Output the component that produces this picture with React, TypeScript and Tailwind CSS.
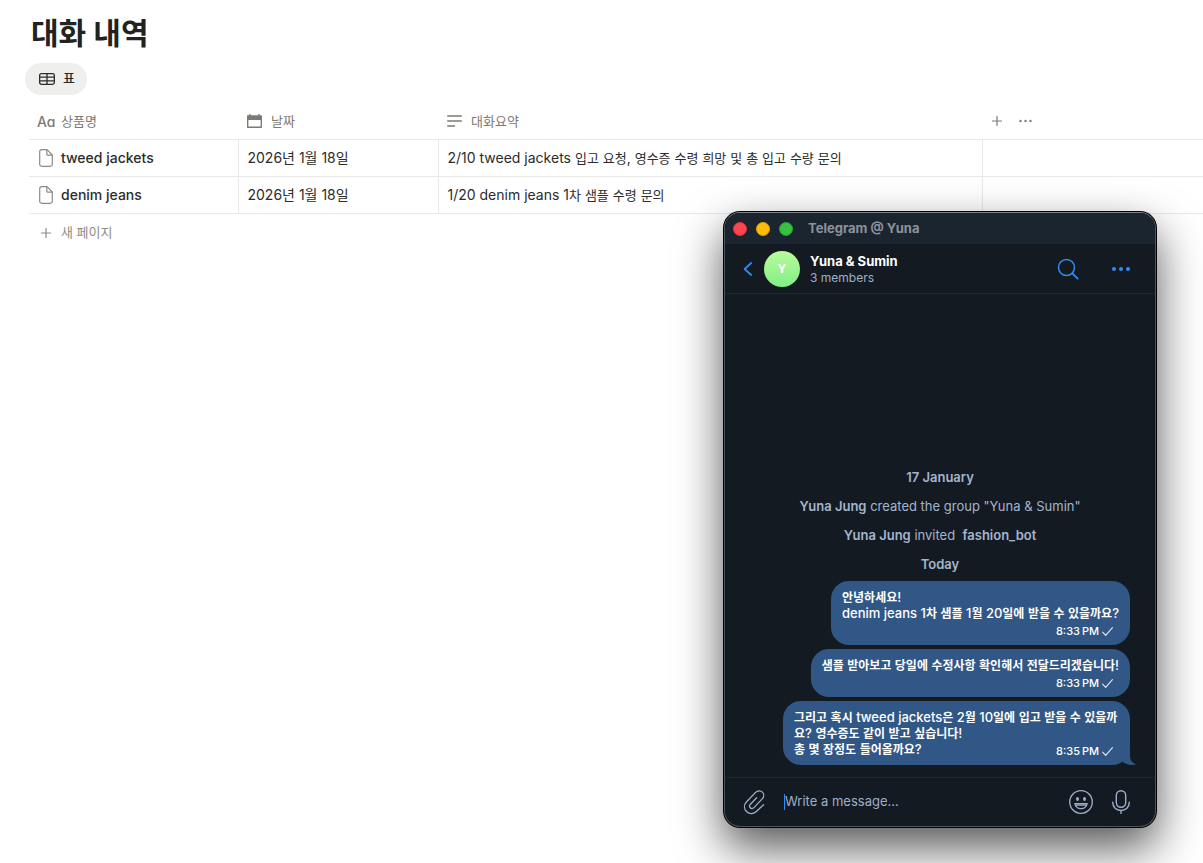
import type { ReactNode } from "react";

const HANGUL = /([\uac00-\ud7a3]+)/;

/** Sets Hangul runs a step smaller than the Latin text around them. */
function Mixed({ text, hangul }: { text: string; hangul: string }) {
  return (
    <>
      {text.split(HANGUL).map((part, i) =>
        HANGUL.test(part) ? (
          <span key={i} className={hangul}>
            {part}
          </span>
        ) : (
          part
        ),
      )}
    </>
  );
}

const rows = [
  {
    name: "tweed jackets",
    date: "2026년 1월 18일",
    summary: "2/10 tweed jackets 입고 요청, 영수증 수령 희망 및 총 입고 수량 문의",
  },
  { name: "denim jeans", date: "2026년 1월 18일", summary: "1/20 denim jeans 1차 샘플 수령 문의" },
];

function TableIcon() {
  return (
    <svg width="16" height="12" viewBox="0 0 16 12" fill="none" stroke="#2c2c2b" strokeWidth="1.3" aria-hidden="true">
      <rect x="0.65" y="0.65" width="14.7" height="10.7" rx="1.8" />
      <path d="M0.65 4.2H15.35M0.65 7.8H15.35M8 0.65V11.35" />
    </svg>
  );
}

function CalendarIcon() {
  return (
    <svg width="15" height="14" viewBox="0 0 15 14" fill="none" aria-hidden="true">
      <path
        fill="#7d7a75"
        fillRule="evenodd"
        d="M2.2 0H3.6V1.3H11.4V0H12.8V1.3H14C14.6 1.3 15 1.7 15 2.3V13C15 13.6 14.6 14 14 14H1C.4 14 0 13.6 0 13V2.3C0 1.7.4 1.3 1 1.3H2.2ZM1.4 6V12.6H13.6V6Z"
      />
    </svg>
  );
}

function LinesIcon() {
  return (
    <svg width="15" height="12" viewBox="0 0 15 12" stroke="#7d7a75" strokeWidth="1.5" strokeLinecap="round" aria-hidden="true">
      <path d="M.75 1H14.25M.75 6H14.25M.75 11H7.5" />
    </svg>
  );
}

function PageIcon() {
  return (
    <svg width="14" height="18" viewBox="0 0 14 18" fill="none" stroke="#8e8b86" strokeWidth="1.2" strokeLinejoin="round" aria-hidden="true">
      <path d="M2.7.7H8L13.300 6V15.200A2 2 0 0 1 11.300 17.300H2.700A2 2 0 0 1 .7 15.200V2.700A2 2 0 0 1 2.700.7Z" />
      <path d="M7.800.9V5.200A1 1 0 0 0 8.800 6.200H13.100" />
    </svg>
  );
}

function PlusIcon({ color }: { color: string }) {
  return (
    <svg width="10" height="10" viewBox="0 0 10 10" stroke={color} strokeWidth="1.2" strokeLinecap="round" aria-hidden="true">
      <path d="M5 .5V9.5M.5 5H9.5" />
    </svg>
  );
}

function Check() {
  return (
    <svg width="11" height="9" viewBox="0 0 11 9" fill="none" stroke="#e4eaf2" strokeWidth="1.1" strokeLinecap="round" strokeLinejoin="round" aria-hidden="true">
      <path d="M.6 5.1L3.7 8.3L10.4.6" />
    </svg>
  );
}

function Bubble({ children, time, tucked, tail }: { children: ReactNode; time: string; tucked?: boolean; tail?: boolean }) {
  return (
    <div className="relative max-w-[347px] rounded-[18px] bg-[#315786] px-[11px] pt-2 pb-[6px] text-[13px] leading-4 font-medium text-white">
      {children}
      <div
        className={`flex h-4 items-center justify-end gap-[3px] pr-[6px] text-[11px] leading-4 ${tucked ? "mt-[-14px]" : "mt-[2px]"}`}
      >
        <span>{time}</span>
        <Check />
      </div>
      {tail && (
        <svg className="absolute -right-[6px] bottom-0" width="16" height="16" viewBox="0 0 16 16" fill="#315786" aria-hidden="true">
          <path d="M0 0H10V7C10 11.500 12 14 16 15.200C12 16.600 7 16 3 13Z" />
        </svg>
      )}
    </div>
  );
}

function ChatWindow() {
  return (
    <section
      aria-label="Telegram @ Yuna"
      className="absolute top-[211px] left-[723px] w-[434px] rounded-[17px] bg-black p-px shadow-[0_20px_46px_rgba(0,0,0,0.66)]"
    >
      <div className="flex min-h-[615px] flex-col overflow-hidden rounded-[16px] border border-[#4e555c] border-t-[#7c848b] bg-[#141a21]">
        <header className="flex h-[31px] items-center gap-[9px] bg-[#1b2530] pl-2">
          <button aria-label="Close" className="size-[14px] rounded-full border border-[#e0303b] bg-[#ff464f]" />
          <button aria-label="Minimise" className="size-[14px] rounded-full border border-[#dfa105] bg-[#fbbc05]" />
          <button aria-label="Zoom" className="size-[14px] rounded-full border border-[#23a52b] bg-[#39bf41]" />
          <h2 className="pl-[6px] text-[13px] font-bold text-[#8d939c]">Telegram @ Yuna</h2>
        </header>

        <div className="flex h-[50px] items-center border-b border-[#1d2733] pl-[18px]">
          <button aria-label="Back">
            <svg width="10" height="14" viewBox="0 0 10 14" fill="none" stroke="#2f8df2" strokeWidth="1.7" strokeLinecap="round" strokeLinejoin="round">
              <path d="M8.200 1L1.600 7L8.200 13" />
            </svg>
          </button>
          <div className="ml-[11px] grid size-9 place-items-center rounded-full bg-linear-to-b from-[#b9fb9b] to-[#7fef87] text-[12px] font-bold text-white">
            Y
          </div>
          <div className="ml-[10px] grow">
            <div className="text-[13px] leading-[18px] font-bold text-white">Yuna &amp; Sumin</div>
            <div className="text-[12px] leading-4 text-[#9db0ca]">3 members</div>
          </div>
          <button aria-label="Search">
            <svg width="22" height="22" viewBox="0 0 22 22" fill="none" stroke="#2f8df2" strokeWidth="1.500" strokeLinecap="round">
              <circle cx="9.500" cy="9.500" r="8" />
              <path d="M15.300 15.300L20.700 20.700" strokeWidth="1.800" />
            </svg>
          </button>
          <button aria-label="More" className="mr-6 ml-8">
            <svg width="20" height="6" viewBox="0 0 20 6" fill="#2f8df2">
              <circle cx="3" cy="3" r="2" />
              <circle cx="10" cy="3" r="2" />
              <circle cx="17" cy="3" r="2" />
            </svg>
          </button>
        </div>

        <div className="flex grow flex-col justify-end pb-3">
          <div className="pb-[2px] text-center text-[13px] leading-[29px] text-[#a3b5cd]">
            <p className="font-semibold">17 January</p>
            <p>
              <b className="font-semibold">Yuna Jung</b> created the group "Yuna &amp; Sumin"
            </p>
            <p>
              <b className="font-semibold">Yuna Jung</b> invited&nbsp; <b className="font-semibold">fashion_bot</b>
            </p>
            <p className="font-semibold">Today</p>
          </div>
          <div className="flex flex-col items-end gap-1 pr-[25px]">
            <Bubble time={"8:33\u2009PM"}>
              <p>
                <Mixed text="안녕하세요!" hangul="text-[12px] leading-none font-semibold" />
              </p>
              <p>
                <Mixed text="denim jeans 1차 샘플 1월 20일에 받을 수 있을까요?" hangul="text-[12px] leading-none font-semibold" />
              </p>
            </Bubble>
            <Bubble time={"8:33\u2009PM"}>
              <p>
                <Mixed text="샘플 받아보고 당일에 수정사항 확인해서 전달드리겠습니다!" hangul="text-[12px] leading-none font-semibold" />
              </p>
            </Bubble>
            <Bubble time={"8:35\u2009PM"} tucked tail>
              <p className="break-all">
                <Mixed
                  text="그리고 혹시 tweed jackets은 2월 10일에 입고 받을 수 있을까요? 영수증도 같이 받고 싶습니다!"
                  hangul="text-[12px] leading-none font-semibold"
                />
              </p>
              <p>
                <Mixed text="총 몇 장정도 들어올까요?" hangul="text-[12px] leading-none font-semibold" />
              </p>
            </Bubble>
          </div>
        </div>

        <div className="flex h-[49px] items-center border-t border-[#1d2733] pr-[25px] pl-[18px] text-[#9db0ca]">
          <button aria-label="Attach">
            <svg width="22" height="26" viewBox="0 0 22 26" fill="none" stroke="currentColor" strokeWidth="1.300" strokeLinecap="round" strokeLinejoin="round">
              <path d="M20.600 15.800L13.600 22.300C10.800 25.200 6.600 25.500 3.700 22.700C.700 19.700.800 15.600 3.600 12.700L12.600 3.400C14.600 1.400 17.600 1.200 19.400 3.100C21.300 5 21.100 7.900 19.200 9.900L10.900 18.600C9.800 19.700 8.200 19.800 7.200 18.800C6.200 17.800 6.300 16.300 7.400 15.200L13.600 8.700" />
            </svg>
          </button>
          <span className="ml-[19px] h-4 w-px shrink-0 bg-[#2f8df2]" />
          <input
            aria-label="Write a message..."
            placeholder="Write a message..."
            className="min-w-0 grow bg-transparent text-[13px] outline-none placeholder:text-[#9db0ca]"
          />
          <button aria-label="Emoji">
            <svg width="24" height="24" viewBox="0 0 24 24" fill="none" stroke="currentColor" strokeWidth="1.300">
              <circle cx="12" cy="12" r="11.300" />
              <ellipse cx="8.500" cy="9" rx="1.500" ry="2" fill="currentColor" stroke="none" />
              <ellipse cx="15.500" cy="9" rx="1.500" ry="2" fill="currentColor" stroke="none" />
              <path d="M5.800 13.700H18.200C17.400 17 15 18.700 12 18.700C9 18.700 6.600 17 5.800 13.700ZM7 15.200H17" strokeLinejoin="round" />
            </svg>
          </button>
          <button aria-label="Voice message" className="ml-[19px]">
            <svg width="18" height="24" viewBox="0 0 18 24" fill="none" stroke="currentColor" strokeWidth="1.400" strokeLinecap="round">
              <rect x="4.300" y=".7" width="9.400" height="16.600" rx="4.700" />
              <path d="M.7 12.300C.7 17.200 4.300 20.500 9 20.500C13.700 20.500 17.300 17.200 17.300 12.300M9 20.500V23.500" />
            </svg>
          </button>
        </div>
      </div>
    </section>
  );
}

export default function App() {
  return (
    <div className="relative min-h-screen overflow-hidden bg-white font-['Inter','Noto_Sans_CJK_KR',sans-serif] text-[#2c2c2b]">
      <main className="pl-[29px]">
        <h1 className="pt-[13px] pl-[2px] text-[30px] leading-[40px] font-bold text-[#222]">대화 내역</h1>
        <button className="mt-[10px] -ml-1 flex h-8 items-center gap-2 rounded-full bg-[#efefed] pr-3 pl-[14px] text-[13px] font-medium">
          <TableIcon />표
        </button>

        <table className="mt-[9px] w-full table-fixed border-collapse text-left text-[14px]">
          <colgroup>
            <col className="w-[209px]" />
            <col className="w-[200px]" />
            <col className="w-[544px]" />
            <col />
          </colgroup>
          <thead>
            <tr className="h-[35px] border-b border-[#e9e9e7] text-[13px] text-[#7d7a75]">
              <th className="p-0 pl-2 font-normal">
                <div className="flex items-center gap-[6px]">
                  <span className="w-[18px] text-[14px] font-medium [font-feature-settings:'cv11']" aria-hidden="true">
                    Aa
                  </span>
                  상품명
                </div>
              </th>
              <th className="p-0 pl-[9px] font-normal">
                <div className="flex items-center gap-[9px]">
                  <CalendarIcon />
                  날짜
                </div>
              </th>
              <th className="p-0 pl-[9px] font-normal">
                <div className="flex items-center gap-[9px]">
                  <LinesIcon />
                  대화요약
                </div>
              </th>
              <th className="p-0 pl-[10px] font-normal">
                <div className="flex items-center gap-[17px]">
                  <button aria-label="Add property">
                    <PlusIcon color="#7d7a75" />
                  </button>
                  <button aria-label="More">
                    <svg width="13" height="4" viewBox="0 0 13 4" fill="#7d7a75">
                      <circle cx="1.500" cy="2" r="1.200" />
                      <circle cx="6.500" cy="2" r="1.200" />
                      <circle cx="11.500" cy="2" r="1.200" />
                    </svg>
                  </button>
                </div>
              </th>
            </tr>
          </thead>
          <tbody>
            {rows.map((row) => (
              <tr key={row.name} className="h-[37px] border-b border-[#e9e9e7]">
                <td className="border-r border-[#e9e9e7] p-0 pl-[10px]">
                  <div className="flex items-center gap-2 font-medium">
                    <PageIcon />
                    {row.name}
                  </div>
                </td>
                <td className="border-r border-[#e9e9e7] p-0 pl-[9px]">{row.date}</td>
                <td className="border-r border-[#e9e9e7] p-0 pl-[9px]">
                  <Mixed text={row.summary} hangul="text-[13px] leading-none" />
                </td>
                <td />
              </tr>
            ))}
          </tbody>
        </table>
        <button className="flex h-[38px] items-center gap-[10px] pl-3 text-[13px] text-[#8e8b86]">
          <PlusIcon color="#8e8b86" />새 페이지
        </button>
      </main>
      <ChatWindow />
    </div>
  );
}
